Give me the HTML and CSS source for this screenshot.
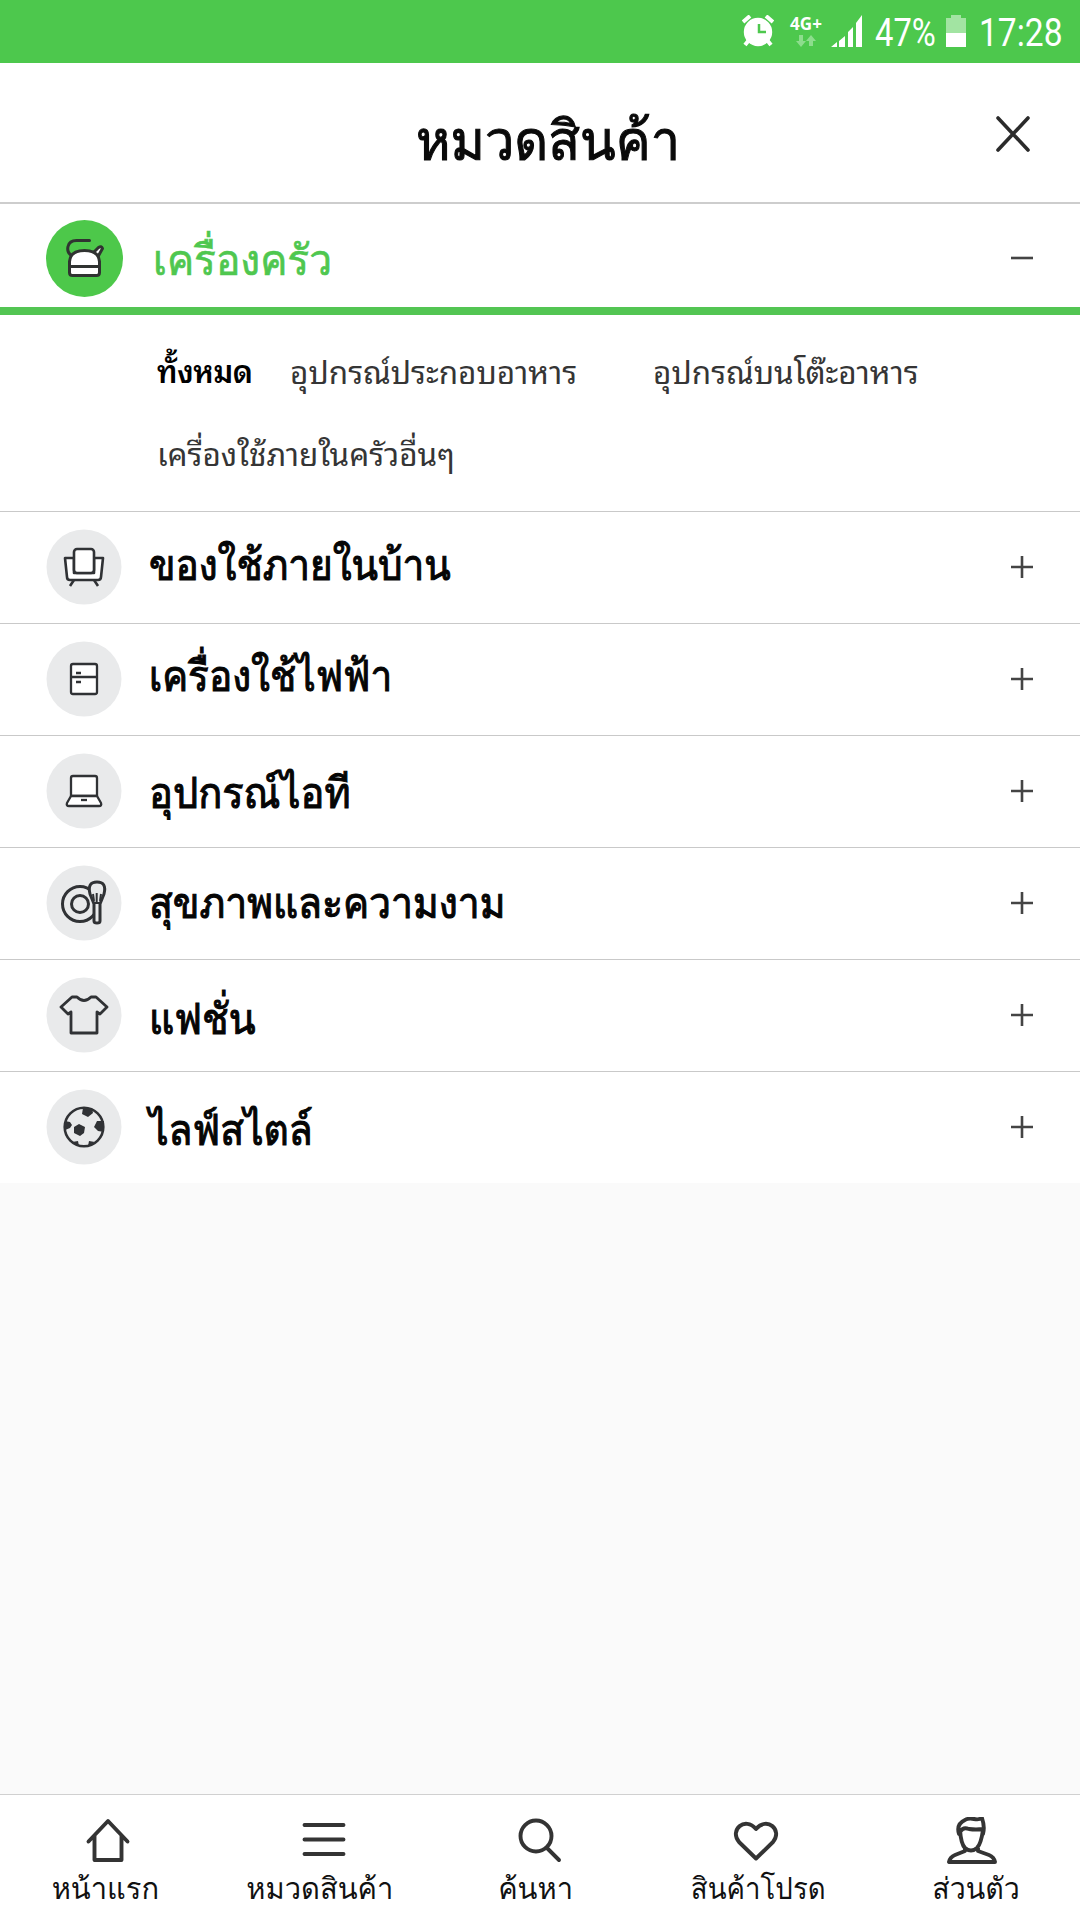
FILE: index.html
```html
<!DOCTYPE html>
<html lang="th">
<head>
<meta charset="utf-8">
<title>หมวดสินค้า</title>
<link rel="stylesheet" href="styles.css">
</head>
<body>
<div class="screen">
  <div class="status">
    <svg class="alarm" width="32" height="32" viewBox="0 0 32 32"><path d="M1 7L8 1M31 7L24 1" stroke="#fff" stroke-width="4"/><path d="M7 25l-4 5M25 25l4 5" stroke="#fff" stroke-width="4"/><circle cx="16" cy="17" r="14.2" fill="#fff"/><path d="M17 9v8h7" fill="none" stroke="#4dc84d" stroke-width="2.5"/></svg>
    <div class="net"><span>4G+</span><svg width="20" height="12" viewBox="0 0 20 12" fill="#8ddd8d"><path d="M3 0h4v6h3l-5 6-5-6h3zM13 11h4V6h3l-5-6-5 6h3z"/></svg></div>
    <svg class="signal" width="32" height="32" viewBox="0 0 32 32" fill="#fff"><path d="M0 32l6-5v5zM8 26l6-5v11H8zM17 17l5-5v20h-5zM25 8l6-8v32h-6z"/></svg>
    <span class="pct">47%</span>
    <svg class="battery" width="20" height="32" viewBox="0 0 20 32"><path d="M5 0h10v3h5v15H0V3h5z" fill="#a2e4a2"/><path d="M0 18h20v14H0z" fill="#fff"/></svg>
    <span class="time">17:28</span>
  </div>
  <header class="header">
    <h1 class="title">หมวดสินค้า</h1>
    <svg class="close" width="36" height="37" viewBox="0 0 36 37"><path d="M2 2L32 34M32 2L2 34" stroke="#2b2b2b" stroke-width="3.6" stroke-linecap="round"/></svg>
  </header>

  <section class="open">
    <svg class="badge" width="77" height="77" viewBox="-38.5 -38.5 77 77"><circle r="38.5" fill="#4dc84a"/><g stroke="#303331" stroke-width="3" stroke-linecap="round" stroke-linejoin="round" fill="none"><path d="M5-18h-13C-18-18-19-7-13-3"/><path d="M9-6l5-5q3-2 4 1l-5 9" fill="#fff"/><path d="M-15 14V3Q-14-8 0-8T15 3v11q0 3-3 3h-24q-3 0-3-3zM-15 8h30" fill="#fff"/></g></svg>
    <h2 class="name name-open">เครื่องครัว</h2>
    <svg class="toggle" width="22" height="22" viewBox="0 0 22 22"><path d="M0 11h22" stroke="#444" stroke-width="2.6"/></svg>
  </section>
  <nav class="subs">
    <a class="sub current">ทั้งหมด</a><a class="sub cook">อุปกรณ์ประกอบอาหาร</a><a class="sub table">อุปกรณ์บนโต๊ะอาหาร</a><a class="sub other">เครื่องใช้ภายในครัวอื่นๆ</a>
  </nav>

  <section class="row">
    <svg class="badge" width="76" height="76" viewBox="-38 -38 76 76"><circle r="37.5" fill="#e9eaeb"/><g stroke="#303235" stroke-width="2.6" stroke-linejoin="round" fill="#fff"><path d="M-19-9h9V6H10V-9h9l-2 19q0 3-3 3h-28q-3 0-3-3z"/><rect x="-10" y="-18" width="20" height="24" rx="3"/><path d="M-10 13l-4 6M10 13l4 6"/></g></svg>
    <h2 class="name n1">ของใช้ภายในบ้าน</h2>
    <svg class="toggle" width="22" height="22" viewBox="0 0 22 22"><path d="M0 11h22M11 0v22" stroke="#444" stroke-width="2.6"/></svg>
  </section>
  <section class="row">
    <svg class="badge" width="76" height="76" viewBox="-38 -38 76 76"><circle r="37.5" fill="#e9eaeb"/><g stroke="#303235" stroke-width="2.3" fill="#fff"><rect x="-13" y="-15" width="26" height="30" rx="2"/><path d="M-13-2h26M-8-6h5M-8 3h5"/></g></svg>
    <h2 class="name n2">เครื่องใช้ไฟฟ้า</h2>
    <svg class="toggle" width="22" height="22" viewBox="0 0 22 22"><path d="M0 11h22M11 0v22" stroke="#444" stroke-width="2.6"/></svg>
  </section>
  <section class="row">
    <svg class="badge" width="76" height="76" viewBox="-38 -38 76 76"><circle r="37.5" fill="#e9eaeb"/><g stroke="#303235" stroke-width="2.3" stroke-linejoin="round" fill="#fff"><path d="M-13 5v-18q0-2 2-2h22q2 0 2 2V5z"/><path d="M-13 5h26l4 7q1 3-2 3h-30q-3 0-2-3z"/><path d="M-3 9h6"/></g></svg>
    <h2 class="name n3">อุปกรณ์ไอที</h2>
    <svg class="toggle" width="22" height="22" viewBox="0 0 22 22"><path d="M0 11h22M11 0v22" stroke="#444" stroke-width="2.6"/></svg>
  </section>
  <section class="row">
    <svg class="badge" width="76" height="76" viewBox="-38 -38 76 76"><circle r="37.5" fill="#e9eaeb"/><g stroke="#303235" stroke-width="3" stroke-linejoin="round" fill="none"><circle cx="-4" cy="1" r="17.5"/><circle cx="-4" cy="1" r="8.500"/><path d="M10 1L6-9q-3-12 7-12t7 12L16 1v17q0 2-3 2t-3-2z" fill="#e9eaeb"/><path d="M9 0h7M9-9l1 7M12.700-10v9M17-9l-1 7" stroke-width="2"/></g></svg>
    <h2 class="name n4">สุขภาพและความงาม</h2>
    <svg class="toggle" width="22" height="22" viewBox="0 0 22 22"><path d="M0 11h22M11 0v22" stroke="#444" stroke-width="2.6"/></svg>
  </section>
  <section class="row">
    <svg class="badge" width="76" height="76" viewBox="-38 -38 76 76"><circle r="37.5" fill="#e9eaeb"/><path d="M-13-3l-3 2-7-7 11-10h5q7 7 14 0h5l11 10-7 7-3-2v21h-26z" stroke="#303235" stroke-width="2.8" stroke-linejoin="round" fill="none"/></svg>
    <h2 class="name n5">แฟชั่น</h2>
    <svg class="toggle" width="22" height="22" viewBox="0 0 22 22"><path d="M0 11h22M11 0v22" stroke="#444" stroke-width="2.6"/></svg>
  </section>
  <section class="row">
    <svg class="badge" width="76" height="76" viewBox="-38 -38 76 76"><circle r="37.5" fill="#e9eaeb"/><circle r="19.3" fill="none" stroke="#303235" stroke-width="2.6"/><path d="M-1-19H8l1 5-5 4-6-3zM20-6v11l-6-1-4-4 3-6zM-19-6l5 1 2 3-2 3-5 2zM-10 0l5-3 6 3-1 6-4 3-6-3zM-12 15l6-1 1 5zM11 15l-6-1-1 5z" fill="#303235"/></svg>
    <h2 class="name n6">ไลฟ์สไตล์</h2>
    <svg class="toggle" width="22" height="22" viewBox="0 0 22 22"><path d="M0 11h22M11 0v22" stroke="#444" stroke-width="2.6"/></svg>
  </section>
  <main class="empty"></main>

  <nav class="tabs">
    <a class="tab"><svg width="50" height="50" viewBox="0 0 50 50"><path d="M5.500 24.500L25 4L44.500 24.500M11.500 19V43h27V19"/></svg><span class="t1">หน้าแรก</span></a>
    <a class="tab"><svg width="50" height="50" viewBox="0 0 50 50"><path d="M5.500 8h39M5.500 22.500h39M5.500 37h39"/></svg><span class="t2">หมวดสินค้า</span></a>
    <a class="tab"><svg width="50" height="50" viewBox="0 0 50 50"><circle cx="21" cy="19" r="15.500"/><path d="M32 31l12 12"/></svg><span class="t3">ค้นหา</span></a>
    <a class="tab"><svg width="50" height="50" viewBox="0 0 50 50"><path d="M25 41.500L8 25C-2 13 14-1 25 12C36-1 52 13 42 25z"/></svg><span class="t4">สินค้าโปรด</span></a>
    <a class="tab"><svg width="50" height="50" viewBox="0 0 50 50"><path d="M13 13q1 14 5 18 6 5 12 0 4-4 6-18M12 17q-3-10 6-14 3-2 9-1 5 1 8-1 3 9 1 16M14 14q2-4 8-2 7 1 14 0M18 31v3L8 38q-5 2-6 7h46q-1-5-6-7l-11-4v-3"/></svg><span class="t5">ส่วนตัว</span></a>
  </nav>
</div>
</body>
</html>
```
FILE: styles.css
```css
* { box-sizing: border-box; }
body { margin: 0; background: #fafafa; font-family: "Noto Sans Thai Looped", "Noto Sans", sans-serif; }
svg { display: block; flex: none; }
h1, h2 { margin: 0; }
.screen { width: 1080px; height: 1920px; display: flex; flex-direction: column; overflow: hidden; }
.status { height: 63px; background: #4dc84d; color: #fff; display: flex; align-items: flex-start; padding: 15px 0 0 742px; font-family: Roboto, sans-serif; }
.net { width: 34px; margin-left: 15px; display: flex; flex-direction: column; align-items: center; font: 700 17px/17px "Open Sans", sans-serif; gap: 3px; }
.signal { margin-left: 8px; }
.pct, .time { font-size: 39px; line-height: 36px; white-space: nowrap; transform-origin: left; }
.pct { width: 62px; margin-left: 12px; transform: scaleX(.84); }
.battery { margin-left: 9px; }
.time { margin-left: 13px; transform: scaleX(.86); }
.header { height: 141px; background: #fff; border-bottom: 2px solid #cdcdcd; display: flex; padding: 50px 48px 0 416px; justify-content: space-between; }
.title, .name, .tab span { font-family: Loma, "Noto Sans Thai Looped", sans-serif; font-weight: 400; }
.title { font-size: 55px; line-height: 56px; white-space: nowrap; color: #0a0a0a; -webkit-text-stroke: 1.1px; transform: scaleX(.95); transform-origin: left; }
.close { margin-top: 3px; }
.open, .row { display: flex; background: #fff; align-items: center; padding-right: 47px; flex: none; }
.open { height: 111px; padding-left: 46px; border-bottom: 8px solid #53c553; padding-top: 5px; }
.name { font-size: 43px; line-height: 60px; color: #050505; -webkit-text-stroke: 1.1px; white-space: nowrap; transform-origin: left; flex: 1; margin-left: 27px; }
.name-open { color: #4fc74f; margin-left: 30px; -webkit-text-stroke: .7px; transform: translateY(2px) scaleX(.945); }
.n1 { transform: translateY(-2px) scaleX(.9); }
.n2 { transform: translateY(-3px) scaleX(.9); }
.n3 { transform: translateY(2px) scaleX(.925); }
.n4 { transform: translateY(0) scaleX(.908); }
.n5 { transform: translateY(4px) scaleX(.912); }
.n6 { transform: translateY(3px) scaleX(.907); }
.subs { height: 196px; background: #fff; display: grid; grid-template: 82px 82px / 133px 363px 1fr; padding: 14px 0 0 157px; }
.sub { font-size: 31.5px; line-height: 82px; color: #353535; white-space: nowrap; }
.current { color: #000; font-size: 30.5px; font-weight: 600; letter-spacing: -.4px; }
.other { grid-column: 1 / -1; }
.row { height: 112px; border-top: 1px solid #c9c9c9; padding: 0 47px 2px 46px; }
.empty { flex: 1; background: #fafafa; }
.tabs { height: 126px; border-top: 1px solid #d0d0d0; background: #fff; display: grid; grid-template-columns: repeat(5, 216px); }
.tab { display: flex; flex-direction: column; align-items: center; padding-top: 22px; }
.tab svg { fill: none; stroke: #343434; stroke-width: 3.9; stroke-linejoin: round; stroke-linecap: round; }
.tab span { font-size: 30px; line-height: 43px; color: #111; white-space: nowrap; }
.t1 { transform: translateX(-3px) scaleX(.97); }
.t2 { transform: translateX(-4px) scaleX(.97); }
.t3 { transform: translateX(-4px) scaleX(.97); }
.t4 { transform: translateX(2px) scaleX(.92); }
.t5 { transform: translateX(4px) scaleX(.95); }
```
